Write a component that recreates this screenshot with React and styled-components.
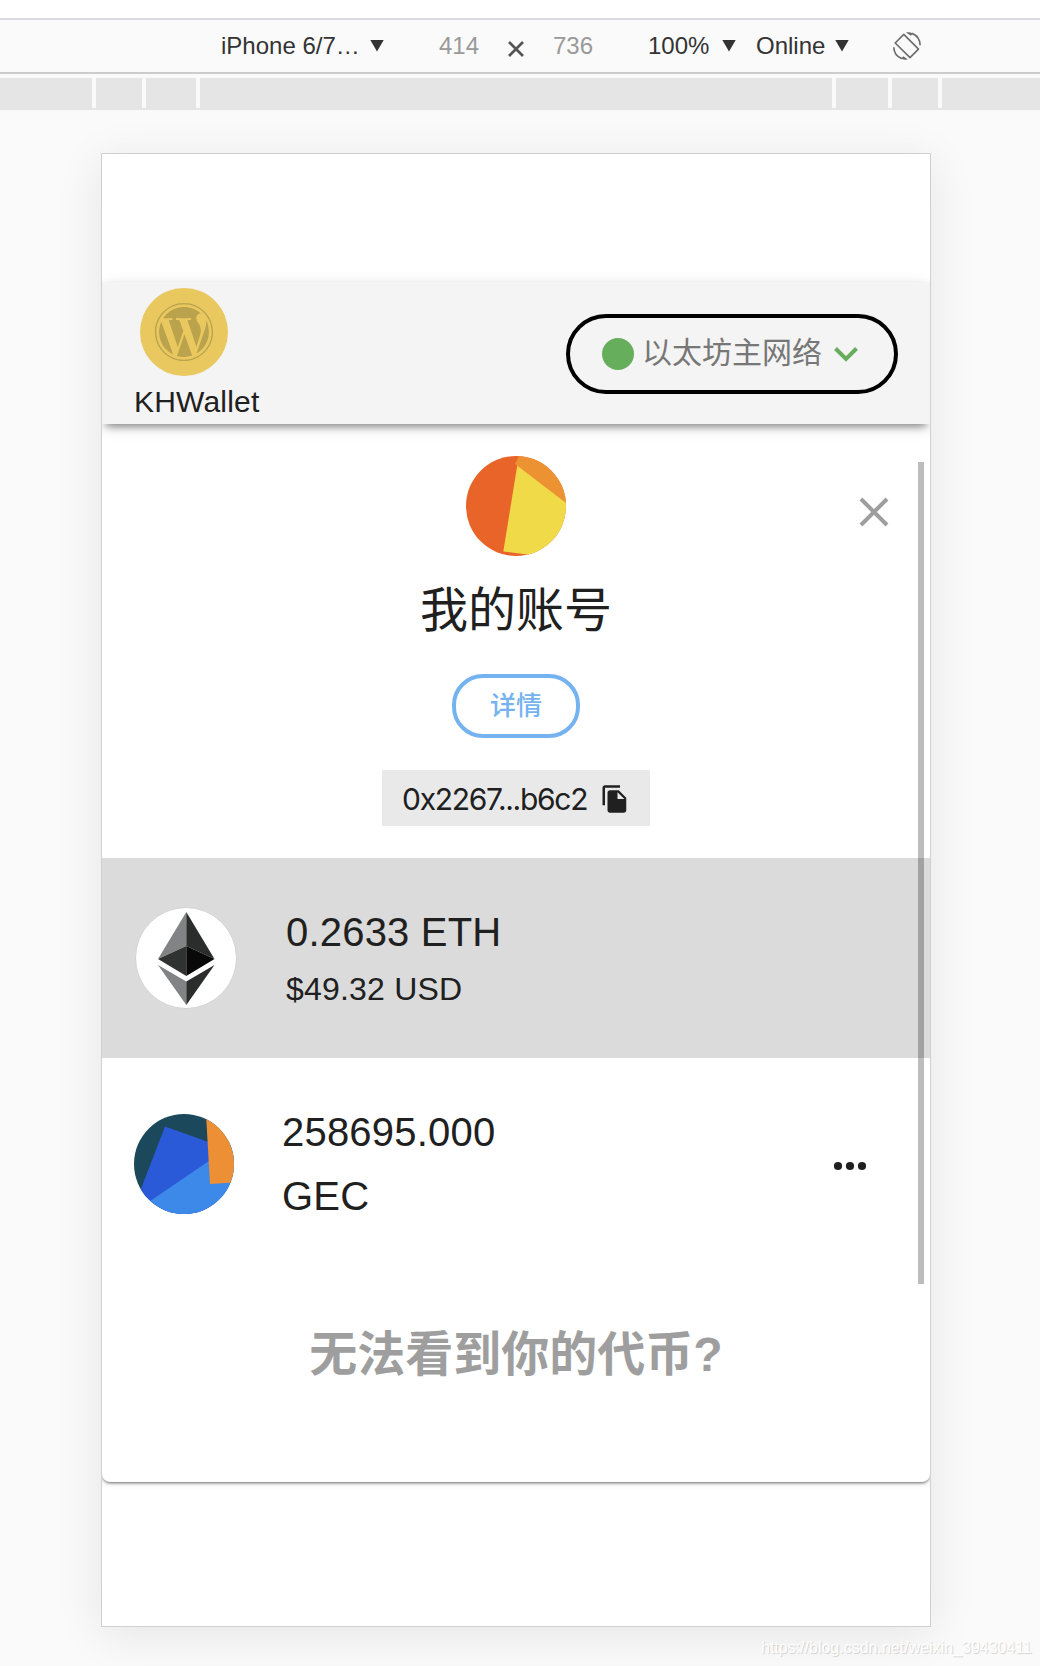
import React from 'react';
import styled, { createGlobalStyle } from 'styled-components';
import { FaWordpress } from 'react-icons/fa';
import { MdFileCopy } from 'react-icons/md';

const GlobalStyle = createGlobalStyle`
  * { box-sizing: border-box; }
  body {
    margin: 0;
    background: #fafafa;
    font-family: "Liberation Sans", "Noto Sans CJK SC", sans-serif;
    color: #202020;
  }
`;

const Page = styled.div`
  position: relative;
  width: 1040px;
  height: 1666px;
  overflow: hidden;
  background: #fafafa;
`;

const TopStrip = styled.div`
  height: 20px;
  background: #fff;
  border-bottom: 2px solid #dadae0;
`;

const Toolbar = styled.div`
  display: flex;
  align-items: center;
  height: 54px;
  padding: 0 0 0 221px;
  border-bottom: 2px solid #ccc;
  font-size: 24px;
  line-height: 28px;
  color: #333;
  white-space: nowrap;
`;

const Select = styled.div`
  display: flex;
  align-items: center;
  justify-content: space-between;
  width: ${(p) => p.$width}px;
  margin-right: ${(p) => p.$after}px;
`;

const Arrow = styled.span`
  width: 14px;
  height: 12px;
  margin-top: -1px;
  background: #333;
  clip-path: polygon(0 0, 100% 0, 50% 100%);
`;

const Dimension = styled.span`
  width: 40px;
  margin-right: ${(p) => p.$after}px;
  color: #999;
`;

const Times = styled.svg`
  margin: 6px 28px 0 0;
`;

const Breakpoints = styled.div`
  display: flex;
  gap: 4px;
  height: 36px;
  padding-top: 4px;
  border-bottom: 2px solid #e5e5e5;
`;

const Range = styled.div`
  width: ${(p) => p.$width}px;
  background: #e5e5e5;
`;

const Device = styled.main`
  width: 830px;
  height: 1474px;
  margin: 43px 0 0 101px;
  padding-top: 128px;
  overflow: hidden;
  background: #fff;
  border: 1px solid #d0d0d0;
  box-shadow: 0 8px 44px rgba(0, 0, 0, 0.085);
`;

const Wallet = styled.section`
  position: relative;
  height: 1200px;
  background: #fff;
  border-radius: 0 0 8px 8px;
  box-shadow: 0 2px 3px -1px rgba(0, 0, 0, 0.55), 0 2px 6px rgba(0, 0, 0, 0.1);
`;

const Header = styled.header`
  display: flex;
  align-items: center;
  justify-content: space-between;
  height: 142px;
  padding: 0 32px;
  background: #f4f4f4;
  box-shadow: 0 6px 8px -4px rgba(0, 0, 0, 0.45), 0 4px 16px -2px rgba(0, 0, 0, 0.15);
`;

const Brand = styled.div`
  height: 134px;
  padding-top: 2px;
`;

const Logo = styled.div`
  display: flex;
  align-items: center;
  justify-content: center;
  width: 88px;
  height: 88px;
  margin-left: 6px;
  border-radius: 50%;
  background: #e9c85f;
  color: #bba24c;
`;

const BrandName = styled.div`
  margin-top: 9px;
  font-size: 30px;
  line-height: 34px;
  letter-spacing: 0.2px;
`;

const Network = styled.button`
  display: flex;
  align-items: center;
  width: 332px;
  height: 80px;
  padding: 0 32px;
  margin-top: 2px;
  border: 4px solid #000;
  border-radius: 40px;
  background: transparent;
  color: #777;
  font: 400 30px/40px "Noto Sans CJK SC", sans-serif;
`;

const StatusDot = styled.span`
  width: 32px;
  height: 32px;
  margin-right: 8px;
  border-radius: 50%;
  background: #66ad5c;
`;

const NetworkName = styled.span`
  margin: -8px 11px 0 0;
`;

const Account = styled.div`
  display: flex;
  flex-direction: column;
  align-items: center;
  height: 434px;
  padding-top: 32px;
`;

const AccountName = styled.h1`
  margin: 19px 0 0;
  font-size: 48px;
  line-height: 72px;
  font-weight: 400;
`;

const Details = styled.button`
  width: 128px;
  height: 64px;
  margin-top: 27px;
  padding: 0 0 4px;
  border: 4px solid #75b3f0;
  border-radius: 31px;
  background: #fff;
  color: #75b3f0;
  font: 500 26px/40px "Noto Sans CJK SC", sans-serif;
`;

const Address = styled.div`
  display: flex;
  align-items: center;
  justify-content: space-between;
  width: 268px;
  height: 56px;
  margin-top: 32px;
  padding: 2px 20px 0 20px;
  background: #e9e9e9;
  font: 400 30px/40px Inter, sans-serif;
  letter-spacing: -1.3px;
`;

const CopyIcon = styled(MdFileCopy)`
  flex: none;
  margin-top: -1px;
`;

const Close = styled.svg`
  position: absolute;
  top: 215px;
  right: 41px;
`;

const TokenRow = styled.div`
  display: flex;
  align-items: center;
  height: ${(p) => (p.$selected ? 200 : 212)}px;
  padding: 0 58px 0 32px;
  background: ${(p) => (p.$selected ? '#dbdbdb' : '#fff')};
`;

const TokenIcon = styled.svg`
  flex: none;
  margin-right: ${(p) => p.$after}px;
`;

const Balance = styled.div`
  flex: 1;
  padding-bottom: ${(p) => p.$raise || 0}px;
  font-size: 40px;
  line-height: 64px;
  letter-spacing: 0.2px;
`;

const Fiat = styled.div`
  margin-top: 1px;
  font-size: 32px;
  line-height: 48px;
`;

const MoreIcon = styled.svg`
  margin-top: 4px;
`;

const Missing = styled.p`
  margin: 49px 0 0;
  text-align: center;
  font-size: 48px;
  line-height: 72px;
  font-weight: 700;
  color: #9e9e9e;
`;

const ScrollThumb = styled.div`
  position: absolute;
  top: 180px;
  right: 6px;
  width: 6px;
  height: 822px;
  background: rgba(0, 0, 0, 0.26);
`;

const Watermark = styled.div`
  position: absolute;
  right: 8px;
  bottom: 8px;
  font-size: 16px;
  line-height: 20px;
  color: #fff;
  text-shadow: 1px 1px 1px rgba(0, 0, 0, 0.16);
`;

const ranges = [92, 46, 50, 632, 52, 46, 98];

function RotateIcon() {
  return (
    <svg width="30" height="30" viewBox="0 0 30 30" fill="none" stroke="#6e6e6e" strokeWidth="1.7">
      <path d="M11.8 3.4 L26.5 18.2 L18 26.7 L3.2 12 Z" strokeLinejoin="round" />
      <path d="M20 2.4 C24.8 4.4 28 9 28.1 14.2" />
      <path d="M1.8 16.2 C2 21.2 5.2 25.8 9.8 27.6" />
      <path d="M14 1.4 C16.4 1 19 1.4 21 2.6 L18.8 4.8 Z M16 28.6 C13.6 29 11 28.6 9 27.4 L11.4 25.2 Z" fill="#6e6e6e" stroke="none" />
    </svg>
  );
}

function AccountAvatar() {
  return (
    <svg width="100" height="100" viewBox="0 0 100 100">
      <clipPath id="account-circle"><circle cx="50" cy="50" r="50" /></clipPath>
      <g clipPath="url(#account-circle)">
        <rect width="100" height="100" fill="#e86429" />
        <path d="M51.5 8 L37.3 95.5 L80 101 L110 90 V45 Z" fill="#f0da48" />
        <path d="M53 0 L49 8 L100 47 L110 0 Z" fill="#ed9233" />
      </g>
    </svg>
  );
}

export default function App() {
  return (
    <Page>
      <GlobalStyle />
      <TopStrip />
      <Toolbar>
        <Select $width={163} $after={55}>iPhone 6/7…<Arrow /></Select>
        <Dimension $after={28}>414</Dimension>
        <Times width="18" height="18" viewBox="0 0 18 18" stroke="#555" strokeWidth="2.7">
          <path d="M2 2 L16 16 M16 2 L2 16" />
        </Times>
        <Dimension $after={55}>736</Dimension>
        <Select $width={88} $after={20}>100%<Arrow /></Select>
        <Select $width={93} $after={43}>Online<Arrow /></Select>
        <RotateIcon />
      </Toolbar>
      <Breakpoints>
        {ranges.map((w, i) => <Range key={i} $width={w} />)}
      </Breakpoints>
      <Device>
        <Wallet>
          <Header>
            <Brand>
              <Logo><FaWordpress size={60} /></Logo>
              <BrandName>KHWallet</BrandName>
            </Brand>
            <Network>
              <StatusDot />
              <NetworkName>以太坊主网络</NetworkName>
              <svg width="26" height="18" viewBox="0 0 26 18" fill="none" stroke="#66ad5c" strokeWidth="4">
                <path d="M2.5 3.5 L13 14 L23.5 3.5" />
              </svg>
            </Network>
          </Header>
          <Account>
            <AccountAvatar />
            <AccountName>我的账号</AccountName>
            <Details>详情</Details>
            <Address>0x2267...b6c2<CopyIcon size={30} /></Address>
          </Account>
          <TokenRow $selected>
            <TokenIcon $after={48} width="104" height="104" viewBox="-2 -2 104 104">
              <circle cx="50" cy="50" r="50.5" fill="#fff" stroke="#d2d2d2" />
              <path d="M50.3 4 L22 51 L50.3 38 Z" fill="#828384" />
              <path d="M50.3 4 L78.5 51 L50.3 38 Z" fill="#2b2d2c" />
              <path d="M50.3 38 L22 51 L50.3 68 Z" fill="#303231" />
              <path d="M50.3 38 L78.5 51 L50.3 68 Z" fill="#090909" />
              <path d="M22 57 L50.3 73.5 V97 Z" fill="#828384" />
              <path d="M78.5 57 L50.3 73.5 V97 Z" fill="#2b2d2c" />
            </TokenIcon>
            <Balance $raise={4}>0.2633 ETH<Fiat>$49.32 USD</Fiat></Balance>
          </TokenRow>
          <TokenRow>
            <TokenIcon $after={48} width="100" height="100" viewBox="0 0 100 100">
              <clipPath id="gec-circle"><circle cx="50" cy="50" r="50" /></clipPath>
              <g clipPath="url(#gec-circle)">
                <rect width="100" height="100" fill="#1b485b" />
                <path d="M31 12.5 L80 30 V100 H0 V93 Z" fill="#2b5ad9" />
                <path d="M75 47 L110 20 V110 H0 V98 Z" fill="#3d89ea" />
                <path d="M72 0 L76 70 L110 68 V0 Z" fill="#ed8f34" />
              </g>
            </TokenIcon>
            <Balance>258695.000<br />GEC</Balance>
            <MoreIcon width="40" height="16" viewBox="0 0 40 16" fill="#202020">
              <circle cx="6" cy="8" r="4.1" /><circle cx="18" cy="8" r="4.1" /><circle cx="30" cy="8" r="4.1" />
            </MoreIcon>
          </TokenRow>
          <Missing>无法看到你的代币?</Missing>
          <Close width="30" height="30" viewBox="0 0 30 30" stroke="#9e9e9e" strokeWidth="4">
            <path d="M2 2 L28 28 M28 2 L2 28" />
          </Close>
          <ScrollThumb />
        </Wallet>
      </Device>
      <Watermark>https://blog.csdn.net/weixin_39430411</Watermark>
    </Page>
  );
}
